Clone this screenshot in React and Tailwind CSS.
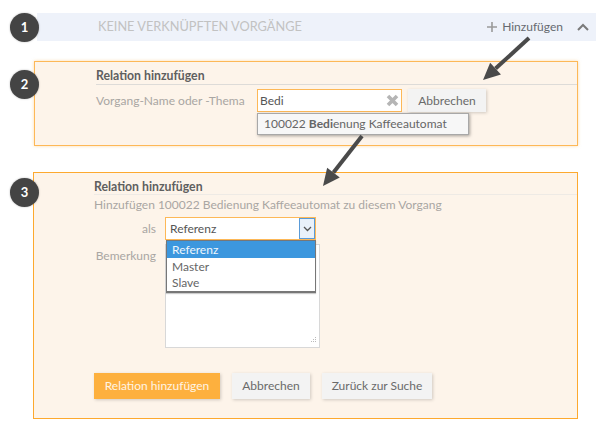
import React from "react";

const Badge = ({ n, className }) => (
  <div className={`absolute left-[10px] w-[29px] h-[29px] rounded-full bg-[#444444] text-white text-[13px] font-bold flex items-center justify-center shadow-[0_0_2px_rgba(0,0,0,0.3)] ${className}`}>{n}</div>
);

const Arrow = ({ x1, y1, x2, y2 }) => {
  const a = Math.atan2(y2 - y1, x2 - x1);
  const len = 17, w = 8;
  const bx = x2 - Math.cos(a) * len, by = y2 - Math.sin(a) * len;
  const nx = -Math.sin(a), ny = Math.cos(a);
  return (
    <g>
      <line x1={x1} y1={y1} x2={bx} y2={by} stroke="#4a4a4a" strokeWidth="4" />
      <polygon points={`${x2},${y2} ${bx + nx * w},${by + ny * w} ${bx - nx * w},${by - ny * w}`} fill="#4a4a4a" />
    </g>
  );
};

const Btn = ({ children, className = "" }) => (
  <div className={`h-[26px] flex items-center justify-center bg-[#f3f3f3] text-[#6a6a6a] text-[12px] shadow-[1px_1px_3px_rgba(0,0,0,0.18)] ${className}`}>{children}</div>
);

export default function App() {
  return (
    <div className="relative w-[600px] h-[433px] bg-white overflow-hidden text-[12px] text-[#666666]" style={{ fontFamily: "Lato, 'Open Sans', sans-serif" }}>
      <div className="pt-[13px] pl-[33px] flex flex-col">
        <div className="ml-[4px] w-[559px] h-[28px] bg-[#eef2fa] flex items-center pl-[61px] pr-[7px]">
          <span className="flex-1 text-[#c2c2c2] text-[12.75px]">KEINE VERKNÜPFTEN VORGÄNGE</span>
          <svg width="10" height="10" viewBox="0 0 10 10" className="mr-[5px]"><path d="M5 0v10M0 5h10" stroke="#9a9a9a" strokeWidth="1.6" /></svg>
          <span className="text-[#666a70] text-[12px]">Hinzufügen</span>
          <svg width="12" height="8" viewBox="0 0 12 8" className="ml-[14px]"><path d="M1 7l5-5 5 5" fill="none" stroke="#7a7a7a" strokeWidth="2" /></svg>
        </div>

        <div className="relative mt-[20px] ml-[1px] w-[544px] h-[85px] bg-[#fdf4ea] border border-[#fdb857] shadow-[0_0_3px_rgba(253,184,87,0.5)] pl-[61px] pt-[6px]">
          <div className="h-[17px] font-bold text-[#5f5f5f] text-[12.25px] border-b border-[#dddbd8] leading-[16px]">Relation hinzufügen</div>
          <div className="flex items-center mt-[4px]">
            <span className="w-[161px] text-[#a9a6a3] whitespace-nowrap">Vorgang-Name oder -Thema</span>
            <div className="w-[145px] h-[23px] bg-white border border-[#fdb857] flex items-center pl-[2px] pr-[2px] text-[#555]">
              <span className="flex-1">Bedi</span>
              <svg width="13" height="13" viewBox="0 0 13 13"><path d="M2 2l9 9M11 2l-9 9" stroke="#b5b5b5" strokeWidth="3.6" /></svg>
            </div>
            <Btn className="ml-[6px] w-[78px] !h-[23px]">Abbrechen</Btn>
          </div>
          <div className="absolute left-[222px] top-[51px] w-[212px] h-[22px] bg-[#f7f7f7] border border-[#a8a8a8] shadow-[1px_1px_3px_rgba(0,0,0,0.35)] flex items-center pl-[6px] text-[#666] whitespace-nowrap">
            <span>100022&nbsp;<b className="font-bold">Bedi</b>enung Kaffeeautomat</span>
          </div>
        </div>

        <div className="relative mt-[26px] w-[545px] h-[247px] bg-[#fdf4ea] border border-[#fda92f] pl-[60px] pt-[6px]">
          <div className="h-[16px] font-bold text-[#5f5f5f] text-[12.25px] border-b border-[#eeeae5] leading-[15px]">Relation hinzufügen</div>
          <div className="text-[#a9a6a3] mt-[1px] leading-[18px] whitespace-nowrap">Hinzufügen 100022 Bedienung Kaffeeautomat zu diesem Vorgang</div>
          <div className="flex mt-[3px]">
            <div className="w-[62px] flex flex-col items-end text-[#a9a6a3] shrink-0">
              <span className="h-[23px] leading-[23px]">als</span>
              <span className="mt-[7px] leading-[18px]">Bemerkung</span>
            </div>
            <div className="relative ml-[9px]">
              <div className="w-[151px] h-[23px] bg-white border border-[#fdb857] flex items-center pl-[4px] text-[#555]">
                <span className="flex-1">Referenz</span>
                <div className="w-[16px] h-[21px] bg-[#e9f1fa] border border-[#5a9bd8] flex items-center justify-center">
                  <svg width="9" height="6" viewBox="0 0 9 6"><path d="M1 1l3.5 3.5L8 1" fill="none" stroke="#555" strokeWidth="1.3" /></svg>
                </div>
              </div>
              <div className="relative mt-[4px] w-[155px] h-[104px] bg-white border border-[#d8d8d8]">
                <svg width="8" height="8" viewBox="0 0 8 8" className="absolute right-[2px] bottom-[2px]"><g fill="#bbb"><rect x="6" y="0" width="1" height="1" /><rect x="4" y="2" width="1" height="1" /><rect x="6" y="2" width="1" height="1" /><rect x="2" y="4" width="1" height="1" /><rect x="4" y="4" width="1" height="1" /><rect x="6" y="4" width="1" height="1" /></g></svg>
              </div>
              <div className="absolute left-[1px] top-[23px] w-[150px] h-[53px] bg-white border border-[#777] border-b-2 flex flex-col text-[#666] shadow-[0_1px_1px_rgba(0,0,0,0.2)]">
                <div className="h-[17px] bg-[#3c97de] text-[#eef6fc] pl-[5px] leading-[17px]">Referenz</div>
                <div className="h-[17px] pl-[5px] leading-[17px]">Master</div>
                <div className="h-[16px] pl-[5px] leading-[16px]">Slave</div>
              </div>
            </div>
          </div>
          <div className="flex gap-[12px] mt-[25px]">
            <Btn className="w-[126px] !bg-[#fdb03e] !text-[#fff4e4]">Relation hinzufügen</Btn>
            <Btn className="w-[78px]">Abbrechen</Btn>
            <Btn className="w-[110px]">Zurück zur Suche</Btn>
          </div>
        </div>
      </div>

      <Badge n="1" className="top-[13px]" />
      <Badge n="2" className="top-[70px]" />
      <Badge n="3" className="top-[178px]" />

      <svg width="600" height="433" className="absolute left-0 top-0 pointer-events-none">
        <Arrow x1={529} y1={38} x2={483} y2={80} />
        <Arrow x1={362} y1={136} x2={323} y2={186} />
      </svg>
    </div>
  );
}
